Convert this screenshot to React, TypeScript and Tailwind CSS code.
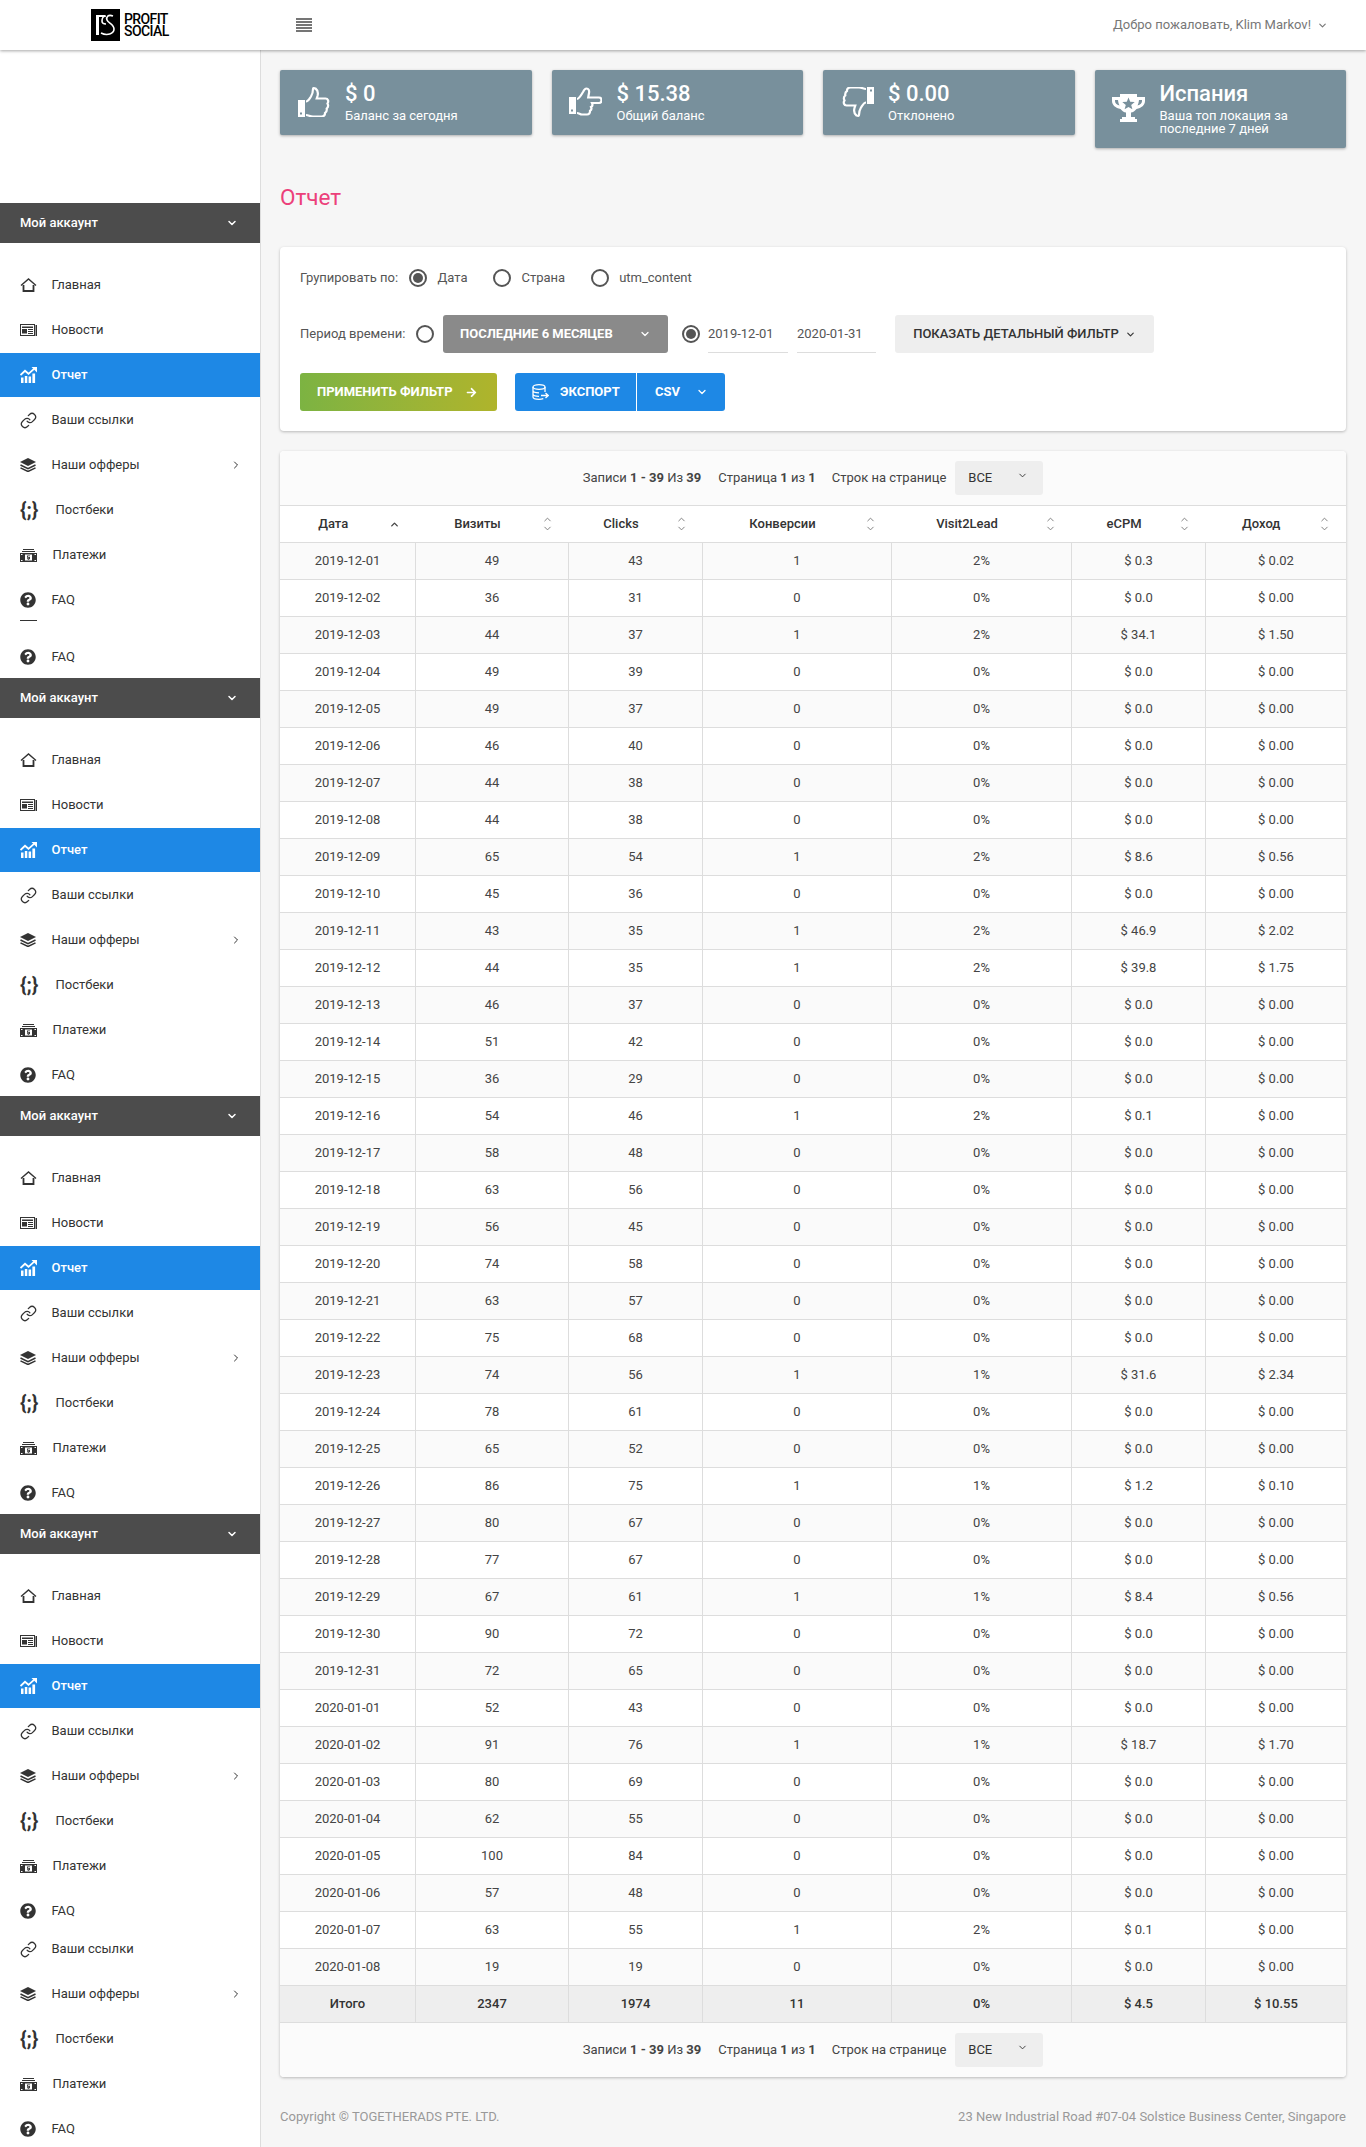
import { ChevronDown, ChevronRight, ChevronUp, Link as LinkIcon } from "lucide-react";
import { ReactNode } from "react";
import { FaArrowRight, FaQuestionCircle } from "react-icons/fa";

function HomeIcon() {
    return (
        <svg width="17" height="14" viewBox="0 0 17 14" fill="none" stroke="currentColor">
            <path d="M1 7.500 8.500 1 16 7.500" strokeWidth="1.400" />
            <path d="M3.500 7v6h10V7" strokeWidth="1.800" />
        </svg>
    );
}

function NewsIcon() {
    return (
        <svg width="17" height="12" viewBox="0 0 17 12">
            <path d="M0 0h15v12H0zM1 1v10h13V1z" fill="currentColor" fillRule="evenodd" />
            <path d="M2 2.500h11V4H2zM2 5h5v4.500H2zM8 5h5v1H8zM8 7h5v1H8zM8 9h5v1H8z" fill="currentColor" />
            <path d="M15.500 1H17v11h-1.500z" fill="currentColor" />
        </svg>
    );
}

function ChartIcon() {
    return (
        <svg width="17" height="16" viewBox="0 0 17 16" fill="currentColor">
            <path d="M1 10.500h2.500V16H1zM4.800 9h2.500v7H4.800zM8.600 9.500h2.500V16H8.600zM12.400 6.500h2.700V16h-2.700z" />
            <path d="M.5 8 5 3.800l3.500 3L14 1.800" fill="none" stroke="currentColor" strokeWidth="1.800" />
            <path d="M11.500 0H17v5.500z" />
        </svg>
    );
}

function LayersIcon() {
    return (
        <svg width="16" height="14" viewBox="0 0 16 14" fill="currentColor">
            <path d="M8 0l8 4-8 4-8-4z" />
            <path d="M.5 7 8 10.700 15.500 7M.5 9.800 8 13.500l7.500-3.700" fill="none" stroke="currentColor" strokeWidth="1.500" />
        </svg>
    );
}

function MoneyIcon() {
    return (
        <svg width="17" height="13" viewBox="0 0 17 13" fill="currentColor">
            <path d="M3 0h11v1H3zM2 2h13v1H2z" />
            <path d="M0 4h17v9H0z" />
            <path d="M5 5.500h7v6H5z" fill="#fff" />
            <path d="M7 6.400h3v.9H7.900v.7H10v2.200H9v.6H8v-.6H7v-.9h2.100v-.5H7z" />
            <path d="M1 5h1.500v1H1zM14.500 11H16v1h-1.500zM14.500 5H16v1h-1.500zM1 11h1.500v1H1z" fill="#fff" />
        </svg>
    );
}

function ThumbUpIcon({ className }: { className?: string }) {
    return (
        <svg width="32" height="30" viewBox="0 0 32 30" className={className}>
            <path d="M0 13h7v17H0zM2 25.500v2h2v-2z" fill="#fff" fillRule="evenodd" />
            <path
                d="M8 14.500c2 0 3-2 5-5 1.500-2.500 2-5 2-7.500 0-1 1-1 2.500-.5 2 1.500 2.800 4.500 2 7.500l-.8 2.500h8.800c2.500 0 3.500 3 2 5 1 2 .5 4-.8 5 .3 2-.5 3.800-1.700 4.500.2 2.300-1.500 3.500-3.500 3.500H15c-3 0-4.500-1.500-7-1.500"
                fill="none"
                stroke="#fff"
                strokeWidth="2.200"
            />
        </svg>
    );
}

function HandRightIcon() {
    return (
        <svg width="33" height="30" viewBox="0 0 33 30">
            <path d="M0 10h7v17H0zM2 22.500v2h2v-2z" fill="#fff" fillRule="evenodd" />
            <path
                d="M8 12c2 0 4-3.500 6-7 1-2 2-3.500 3.500-3.500 2 0 3 2 2.500 4.500l-.8 4.500H30c1.700 0 2.500 1.200 2.500 2.700s-1 2.800-2.500 2.800h-7c.8 1.700.3 3.300-1 4 .8 1.700.2 3.200-1 3.800.2 2.200-1 3.700-3 3.700h-5c-2 0-3-1.500-5-1.500"
                fill="none"
                stroke="#fff"
                strokeWidth="2.200"
            />
        </svg>
    );
}

function TrophyIcon() {
    return (
        <svg width="33" height="28" viewBox="0 0 33 28" fill="#fff">
            <path
                fillRule="evenodd"
                d="M8 0h17v3h8v4c0 4-3.500 7-8.500 8-1.500 2-3.500 3.200-5.500 3.600V23h4v2h2v3H8v-3h2v-2h4v-4.400c-2-.4-4-1.600-5.500-3.600C3.500 14 0 11 0 7V3h8zM3 6v1c0 2 1.500 3.600 4.500 4.500C6.700 10 6.200 8 6 6zm27 0h-3c-.2 2-.7 4-1.500 5.500C28.500 10.600 30 9 30 7zM16.500 3.500l-1.700 4.200-4.500.3 3.500 2.900-1.200 4.400 3.900-2.400 3.900 2.400-1.200-4.400 3.500-2.900-4.500-.3z"
            />
        </svg>
    );
}

function ExportIcon() {
    return (
        <svg width="17" height="16" viewBox="0 0 17 16" fill="none" stroke="currentColor" strokeWidth="1.300">
            <ellipse cx="7" cy="3" rx="6" ry="2.300" />
            <path d="M1 3v10c0 1.300 2.700 2.300 6 2.300 1.700 0 3.200-.3 4.300-.7M13 3v5M1 6.500c0 1.300 2.700 2.300 6 2.300M1 10c0 1.300 2.700 2.300 6 2.300" />
            <path d="M9 11.500h7M13.500 9l2.700 2.500-2.700 2.500" />
        </svg>
    );
}

function LogoMark() {
    return (
        <svg width="29" height="32" viewBox="0 0 29 32" className="shrink-0">
            <path d="M0 0h29v32H0z" fill="#000" />
            <path d="M5 6h3v20H5zM5 6h9v2H5z" fill="#fff" />
            <path
                d="M22 7c-5-2-7 1-6 4 1 3 7 4 7 9 0 5-7 7-13 4M15 7c-3 0-4 3-4 5 0 2 2 3 4 3"
                fill="none"
                stroke="#fff"
                strokeWidth="1.600"
            />
        </svg>
    );
}

interface NavItemProps {
    icon: ReactNode;
    label: string;
    active?: boolean;
    arrow?: boolean;
    labelClass?: string;
}

function NavItem({ icon, label, active, arrow, labelClass }: NavItemProps) {
    return (
        <div
            className={`h-[44px] mb-px pl-5 pr-[18px] flex items-center text-[13px] ${
                active ? "bg-[#1e88e5] text-white font-medium" : "text-[#333]"
            }`}
        >
            <span className="w-[31.500px] shrink-0 flex items-center">{icon}</span>
            <span className={labelClass}>{label}</span>
            {arrow && <ChevronRight size={12} className="ml-auto" />}
        </div>
    );
}

const homeItem = <NavItem icon={<HomeIcon />} label="Главная" />;
const newsItem = <NavItem icon={<NewsIcon />} label="Новости" />;
const reportItem = <NavItem icon={<ChartIcon />} label="Отчет" active />;
const linksItem = <NavItem icon={<LinkIcon size={17} strokeWidth={1.8} />} label="Ваши ссылки" />;
const offersItem = <NavItem icon={<LayersIcon />} label="Наши офферы" arrow />;
const postbackItem = (
    <NavItem
        icon={<span className="text-[20px] leading-none font-bold whitespace-nowrap">{"{;}"}</span>}
        label="Постбеки"
        labelClass="ml-[4px]"
    />
);
const paymentsItem = <NavItem icon={<MoneyIcon />} label="Платежи" labelClass="ml-px" />;
const faqItem = <NavItem icon={<FaQuestionCircle size={16} />} label="FAQ" />;

function AccountBar() {
    return (
        <div className="h-10 bg-[#4c4c4c] text-white text-[13px] font-medium flex items-center justify-between pl-5 pr-[22px]">
            <span>Мой аккаунт</span>
            <ChevronDown size={12} strokeWidth={3} />
        </div>
    );
}

function NavBlock({ children }: { children?: ReactNode }) {
    return (
        <div>
            <AccountBar />
            <div className="mt-5 mb-[-2px]">
                {homeItem}
                {newsItem}
                {reportItem}
                {linksItem}
                {offersItem}
                {postbackItem}
                {paymentsItem}
                {faqItem}
            </div>
            {children}
        </div>
    );
}

function Sidebar() {
    return (
        <aside className="w-[261px] shrink-0 bg-white border-r border-[#ddd] overflow-hidden pt-[153px]">
            <NavBlock>
                <div className="ml-5 w-[17px] h-px bg-[#333] -mt-[3px]" />
                <div className="mt-[14px] mb-[-2px]">{faqItem}</div>
            </NavBlock>
            <NavBlock />
            <NavBlock />
            <NavBlock>
                <div className="-mt-[7px]">
                    {linksItem}
                    {offersItem}
                    {postbackItem}
                    {paymentsItem}
                    {faqItem}
                </div>
            </NavBlock>
        </aside>
    );
}

function Header() {
    return (
        <header className="relative z-10 h-[50px] shrink-0 bg-white shadow-[0_1px_3px_rgba(0,0,0,0.35)] flex items-center">
            <div className="w-[261px] shrink-0 pl-[91px] flex items-center">
                <LogoMark />
                <div className="ml-1 text-[14px] leading-[12px] font-medium tracking-[-0.6px] text-black">
                    PROFIT
                    <br />
                    SOCIAL
                </div>
            </div>
            <svg width="16" height="14" viewBox="0 0 16 14" fill="#757575" className="ml-[35px]">
                <path d="M0 0h16v2H0zM0 3h16v2H0zM0 6h16v2H0zM0 9h16v2H0zM0 12h16v2H0z" />
            </svg>
            <div className="ml-auto pr-[38px] flex items-center text-[13px] text-[#777]">
                Добро пожаловать, Klim Markov!
                <ChevronDown size={11} strokeWidth={2.5} className="ml-[6px]" />
            </div>
        </header>
    );
}

interface StatCardProps {
    icon: ReactNode;
    title: string;
    label: ReactNode;
    iconClass: string;
}

function StatCard({ icon, title, label, iconClass }: StatCardProps) {
    return (
        <div className="rounded-[2px] bg-[#78909c] text-white shadow-[0_1px_3px_rgba(0,0,0,0.3)] flex pt-[11px] pb-[13px]">
            <div className={`w-[65px] shrink-0 ${iconClass}`}>{icon}</div>
            <div>
                <div className="text-[22px] leading-[26px] font-medium">{title}</div>
                <div className="mt-[2px] text-[13px] leading-[13px]">{label}</div>
            </div>
        </div>
    );
}

function Radio({ checked }: { checked?: boolean }) {
    return (
        <span className="w-[18px] h-[18px] shrink-0 rounded-full border-2 border-[#555] flex items-center justify-center">
            {checked && <span className="w-[10px] h-[10px] rounded-full bg-[#555]" />}
        </span>
    );
}

function FilterCard() {
    return (
        <section className="rounded bg-white shadow-[0_1px_3px_rgba(0,0,0,0.25)] pl-5 pt-[22px] pb-5 text-[13px] text-[#555]">
            <div className="h-[18px] flex items-center">
                <span className="w-[108.500px]">Групировать по:</span>
                <Radio checked />
                <span className="ml-[11px]">Дата</span>
                <span className="ml-[26px]">
                    <Radio />
                </span>
                <span className="ml-[10px]">Страна</span>
                <span className="ml-[26px]">
                    <Radio />
                </span>
                <span className="ml-[10px]">utm_content</span>
            </div>

            <div className="mt-[28px] h-[38px] flex items-center">
                <span className="w-[116px]">Период времени:</span>
                <Radio />
                <div className="ml-[9px] w-[225px] h-[38px] rounded-[3px] bg-[#8a8a8a] text-white font-bold pl-[17px] pr-[17px] flex items-center justify-between">
                    ПОСЛЕДНИЕ 6 МЕСЯЦЕВ
                    <ChevronDown size={12} strokeWidth={2.5} />
                </div>
                <span className="ml-[14px]">
                    <Radio checked />
                </span>
                <div className="ml-[8px] w-[80px] h-[38px] border-b border-[#ddd] flex items-center">2019-12-01</div>
                <div className="ml-[9px] w-[79px] h-[38px] border-b border-[#ddd] flex items-center">2020-01-31</div>
                <div className="ml-[19px] w-[259px] h-[38px] rounded-[3px] bg-[#eee] text-[#333] font-medium flex items-center justify-center gap-[6px]">
                    ПОКАЗАТЬ ДЕТАЛЬНЫЙ ФИЛЬТР
                    <ChevronDown size={11} strokeWidth={2.5} />
                </div>
            </div>

            <div className="mt-[20px] flex items-center text-white font-bold">
                <div className="w-[197px] h-[38px] rounded-[3px] bg-gradient-to-r from-[#7cb342] to-[#afb42b] pl-[17px] flex items-center">
                    ПРИМЕНИТЬ ФИЛЬТР
                    <FaArrowRight size={11} className="ml-[13px]" />
                </div>
                <div className="ml-[18px] w-[121px] h-[38px] rounded-l-[3px] bg-[#1e88e5] pl-[17px] flex items-center">
                    <ExportIcon />
                    <span className="ml-[11px]">ЭКСПОРТ</span>
                </div>
                <div className="ml-px w-[88px] h-[38px] rounded-r-[3px] bg-[#1e88e5] pl-[18px] pr-[17px] flex items-center justify-between">
                    CSV
                    <ChevronDown size={12} strokeWidth={2.5} />
                </div>
            </div>
        </section>
    );
}

function Pager() {
    return (
        <div className="h-[54px] bg-[#fbfbfb] flex items-center justify-center text-[13px] text-[#444]">
            <span>
                Записи <b className="font-bold">1 - 39</b> Из <b className="font-bold">39</b>
            </span>
            <span className="ml-[17px]">
                Страница <b className="font-bold">1</b> из <b className="font-bold">1</b>
            </span>
            <span className="ml-[16px]">Строк на странице</span>
            <div className="ml-[9px] w-[88px] h-[34px] rounded-[3px] bg-[#eee] pl-[13px] pr-[15px] flex items-center justify-between text-[#333]">
                BCE
                <ChevronDown size={11} strokeWidth={2} className="-mt-[5px]" />
            </div>
        </div>
    );
}

const columns = [
    { name: "Дата", width: "w-[135.500px]" },
    { name: "Визиты", width: "w-[153px]" },
    { name: "Clicks", width: "w-[134px]" },
    { name: "Конверсии", width: "w-[189px]" },
    { name: "Visit2Lead", width: "w-[180px]" },
    { name: "eCPM", width: "w-[134px]" },
    { name: "Доход", width: "" },
];

// дата, визиты, клики, конверсии, v2l, ecpm, доход
const rows: [string, number, number, number, string, string, string][] = [
    ["2019-12-01", 49, 43, 1, "2%", "0.3", "0.02"],
    ["2019-12-02", 36, 31, 0, "0%", "0.0", "0.00"],
    ["2019-12-03", 44, 37, 1, "2%", "34.1", "1.50"],
    ["2019-12-04", 49, 39, 0, "0%", "0.0", "0.00"],
    ["2019-12-05", 49, 37, 0, "0%", "0.0", "0.00"],
    ["2019-12-06", 46, 40, 0, "0%", "0.0", "0.00"],
    ["2019-12-07", 44, 38, 0, "0%", "0.0", "0.00"],
    ["2019-12-08", 44, 38, 0, "0%", "0.0", "0.00"],
    ["2019-12-09", 65, 54, 1, "2%", "8.6", "0.56"],
    ["2019-12-10", 45, 36, 0, "0%", "0.0", "0.00"],
    ["2019-12-11", 43, 35, 1, "2%", "46.9", "2.02"],
    ["2019-12-12", 44, 35, 1, "2%", "39.8", "1.75"],
    ["2019-12-13", 46, 37, 0, "0%", "0.0", "0.00"],
    ["2019-12-14", 51, 42, 0, "0%", "0.0", "0.00"],
    ["2019-12-15", 36, 29, 0, "0%", "0.0", "0.00"],
    ["2019-12-16", 54, 46, 1, "2%", "0.1", "0.00"],
    ["2019-12-17", 58, 48, 0, "0%", "0.0", "0.00"],
    ["2019-12-18", 63, 56, 0, "0%", "0.0", "0.00"],
    ["2019-12-19", 56, 45, 0, "0%", "0.0", "0.00"],
    ["2019-12-20", 74, 58, 0, "0%", "0.0", "0.00"],
    ["2019-12-21", 63, 57, 0, "0%", "0.0", "0.00"],
    ["2019-12-22", 75, 68, 0, "0%", "0.0", "0.00"],
    ["2019-12-23", 74, 56, 1, "1%", "31.6", "2.34"],
    ["2019-12-24", 78, 61, 0, "0%", "0.0", "0.00"],
    ["2019-12-25", 65, 52, 0, "0%", "0.0", "0.00"],
    ["2019-12-26", 86, 75, 1, "1%", "1.2", "0.10"],
    ["2019-12-27", 80, 67, 0, "0%", "0.0", "0.00"],
    ["2019-12-28", 77, 67, 0, "0%", "0.0", "0.00"],
    ["2019-12-29", 67, 61, 1, "1%", "8.4", "0.56"],
    ["2019-12-30", 90, 72, 0, "0%", "0.0", "0.00"],
    ["2019-12-31", 72, 65, 0, "0%", "0.0", "0.00"],
    ["2020-01-01", 52, 43, 0, "0%", "0.0", "0.00"],
    ["2020-01-02", 91, 76, 1, "1%", "18.7", "1.70"],
    ["2020-01-03", 80, 69, 0, "0%", "0.0", "0.00"],
    ["2020-01-04", 62, 55, 0, "0%", "0.0", "0.00"],
    ["2020-01-05", 100, 84, 0, "0%", "0.0", "0.00"],
    ["2020-01-06", 57, 48, 0, "0%", "0.0", "0.00"],
    ["2020-01-07", 63, 55, 1, "2%", "0.1", "0.00"],
    ["2020-01-08", 19, 19, 0, "0%", "0.0", "0.00"],
];

const totals = ["Итого", "2347", "1974", "11", "0%", "$ 4.5", "$ 10.55"];

function SortIcon({ sorted }: { sorted: boolean }) {
    return (
        <span className="w-[29px] pr-4 flex justify-end shrink-0">
            {sorted ? (
                <ChevronUp size={11} strokeWidth={3} className="text-[#444]" />
            ) : (
                <span className="flex flex-col text-[#777]">
                    <ChevronUp size={11} strokeWidth={2} className="-mb-[2px]" />
                    <ChevronDown size={11} strokeWidth={2} />
                </span>
            )}
        </span>
    );
}

function ReportTable() {
    return (
        <section className="mt-5 rounded bg-white shadow-[0_1px_3px_rgba(0,0,0,0.25)] overflow-hidden">
            <Pager />
            <table className="w-full table-fixed border-collapse text-[13px] text-[#444]">
                <thead>
                    <tr className="h-[37px] bg-white border-y border-t-[#ddd] border-b-[#bbb]">
                        {columns.map((col, i) => (
                            <th key={col.name} className={`${col.width} p-0 font-medium text-[#333]`}>
                                <div className="flex items-center">
                                    <span className="flex-1 text-center">{col.name}</span>
                                    <SortIcon sorted={i === 0} />
                                </div>
                            </th>
                        ))}
                    </tr>
                </thead>
                <tbody>
                    {rows.map((row, i) => (
                        <tr key={row[0]} className={`h-[37px] ${i % 2 === 0 ? "bg-[#fafafa]" : "bg-white"}`}>
                            <td className="p-0 text-center border border-l-0 border-[#ddd]">{row[0]}</td>
                            <td className="p-0 text-center border border-[#ddd]">{row[1]}</td>
                            <td className="p-0 text-center border border-[#ddd]">{row[2]}</td>
                            <td className="p-0 text-center border border-[#ddd]">{row[3]}</td>
                            <td className="p-0 text-center border border-[#ddd]">{row[4]}</td>
                            <td className="p-0 text-center border border-[#ddd]">$ {row[5]}</td>
                            <td className="p-0 text-center border border-r-0 border-[#ddd]">$ {row[6]}</td>
                        </tr>
                    ))}
                    <tr className="h-[37px] bg-[#eee] border-t border-t-[#bbb] border-b border-b-[#ddd]">
                        {totals.map((value) => (
                            <td
                                key={value}
                                className="p-0 text-center font-medium text-[#333] border-r border-[#ddd] last:border-r-0"
                            >
                                {value}
                            </td>
                        ))}
                    </tr>
                </tbody>
            </table>
            <Pager />
        </section>
    );
}

export default function App() {
    return (
        <div className="h-[2147px] overflow-hidden flex flex-col bg-[#f6f6f6] font-[family-name:Roboto,sans-serif]">
            <Header />
            <div className="flex flex-1 min-h-0">
                <Sidebar />
                <main className="flex-1 min-w-0 pl-[19px] pr-5 pt-5">
                    <div className="grid grid-cols-4 gap-5 items-start">
                        <StatCard icon={<ThumbUpIcon />} title="$ 0" label="Баланс за сегодня" iconClass="pl-[18px] pt-[6px]" />
                        <StatCard icon={<HandRightIcon />} title="$ 15.38" label="Общий баланс" iconClass="pl-[17px] pt-[6px]" />
                        <StatCard
                            icon={<ThumbUpIcon className="rotate-180" />}
                            title="$ 0.00"
                            label="Отклонено"
                            iconClass="pl-[19px] pt-[6px]"
                        />
                        <StatCard
                            icon={<TrophyIcon />}
                            title="Испания"
                            label={
                                <>
                                    Ваша топ локация за
                                    <br />
                                    последние 7 дней
                                </>
                            }
                            iconClass="pl-[17px] pt-[13px]"
                        />
                    </div>
                    <h1 className="mt-[33px] mb-[34px] h-[32px] text-[22.500px] leading-[32px] text-[#ec407a]">Отчет</h1>
                    <FilterCard />
                    <ReportTable />
                    <footer className="mt-[32px] flex justify-between text-[13px] leading-4 text-[#999]">
                        <span>Copyright © TOGETHERADS PTE. LTD.</span>
                        <span>23 New Industrial Road #07-04 Solstice Business Center, Singapore</span>
                    </footer>
                </main>
            </div>
        </div>
    );
}
